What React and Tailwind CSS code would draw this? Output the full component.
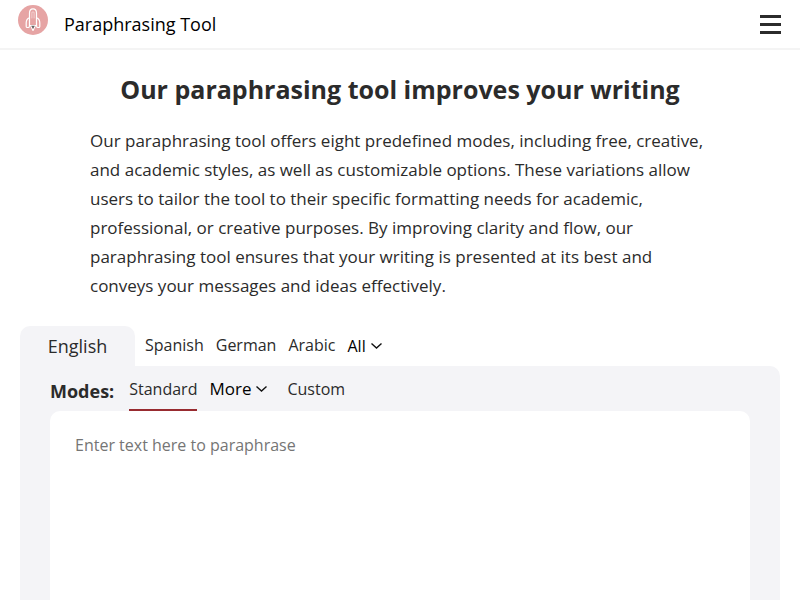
import React, { useState } from 'react';

const languages = ['English', 'Spanish', 'German', 'Arabic'];

function Logo() {
  return (
    <svg width="30" height="30" viewBox="0 0 30 30" fill="none" aria-hidden="true">
      <circle cx="15" cy="15" r="15" fill="#e6a4a4" />
      <g stroke="#ffffff" strokeWidth="1.2" strokeLinejoin="round" strokeLinecap="round">
        <path d="M11.5 20.5V8Q11.5 3.9 15 3.9Q18.5 3.9 18.5 8V20.5Z" />
        <path d="M13.9 13V7.6Q13.9 6.9 15 6.9Q16.1 6.9 16.1 7.6V13" strokeWidth="0.5" />
        <path d="M11.5 12.8Q8.2 14 8.2 18V21.4Q8.2 22.5 9.4 22.5H10.4Q11.5 22.5 11.5 20.5" />
        <path d="M18.5 12.8Q21.8 14 21.8 18V21.4Q21.8 22.5 20.6 22.5H19.6Q18.5 22.5 18.5 20.5" />
        <path d="M12.8 20.8L15 25.4L17.2 20.8" />
      </g>
      <path d="M13.2 20.8H16.8L15 24Z" fill="#666666" />
    </svg>
  );
}

function Chevron() {
  return (
    <svg width="12" height="12" viewBox="0 0 12 12" fill="none" aria-hidden="true">
      <path d="M1.5 3.5L6.5 8L11.5 3.5" stroke="#111111" strokeWidth="1.4" />
    </svg>
  );
}

export default function App() {
  const [language, setLanguage] = useState('English');
  const [mode, setMode] = useState('Standard');
  const [text, setText] = useState('');

  return (
    <div className="min-h-screen bg-white font-['Open_Sans',sans-serif] text-[#2b2b2b]">
      <header className="flex h-[50px] items-center justify-between border-b-2 border-[#f4f4f4] pl-[18px] pr-[19px]">
        <a href="#" className="flex items-center gap-4 text-lg text-black">
          <span className="mb-2"><Logo /></span>
          Paraphrasing Tool
        </a>
        <button type="button" aria-label="Menu" className="flex flex-col gap-[5px]">
          <span className="h-[3px] w-[21px] bg-[#2b2b2b]" />
          <span className="h-[3px] w-[21px] bg-[#2b2b2b]" />
          <span className="h-[3px] w-[21px] bg-[#2b2b2b]" />
        </button>
      </header>

      <main className="px-5 pt-5">
        <h1 className="text-center text-[25px] leading-[38px] font-bold">Our paraphrasing tool improves your writing</h1>
        <p className="mx-[70px] mt-[18px] text-[17px] leading-[29px]">
          Our paraphrasing tool offers eight predefined modes, including free, creative, and academic styles, as well
          as customizable options. These variations allow users to tailor the tool to their specific formatting needs
          for academic, professional, or creative purposes. By improving clarity and flow, our paraphrasing tool
          ensures that your writing is presented at its best and conveys your messages and ideas effectively.
        </p>

        {/* Languages */}
        <div className="mt-[26px] flex h-10 items-center">
          {languages.map((item) => (
            <button
              key={item}
              type="button"
              onClick={() => setLanguage(item)}
              className={language === item
                ? 'mr-[10px] h-10 w-[115px] rounded-t-[10px] bg-[#f4f4f7] text-lg'
                : 'mr-3 pb-[2px] text-base'}
            >
              {item}
            </button>
          ))}
          <button type="button" className="flex items-center gap-1 text-base text-black">
            All
            <Chevron />
          </button>
        </div>

        <section className="rounded-tr-[10px] bg-[#f4f4f7] px-[30px] pb-[30px]">
          <div className="flex h-[45px] items-center">
            <span className="mr-[15px] mt-1 text-lg font-bold">Modes:</span>
            <button
              type="button"
              onClick={() => setMode('Standard')}
              className={`h-[45px] border-b-2 pt-[2px] text-base ${mode === 'Standard' ? 'border-[#982b30]' : 'border-transparent'}`}
            >
              Standard
            </button>
            <button type="button" className="ml-3 flex h-[45px] items-center gap-1 border-b-2 border-transparent pt-[2px] text-[17px] text-black">
              More
              <Chevron />
            </button>
            <button
              type="button"
              onClick={() => setMode('Custom')}
              className={`ml-5 h-[45px] border-b-2 pt-[2px] text-base ${mode === 'Custom' ? 'border-[#982b30]' : 'border-transparent'}`}
            >
              Custom
            </button>
          </div>
          <textarea
            aria-label="Text to paraphrase"
            value={text}
            onChange={(e) => setText(e.target.value)}
            placeholder="Enter text here to paraphrase"
            className="block h-80 w-full resize-none rounded-[10px] bg-white px-[25px] py-[22px] text-base outline-none placeholder:text-[#757575]"
          />
        </section>
      </main>
    </div>
  );
}
